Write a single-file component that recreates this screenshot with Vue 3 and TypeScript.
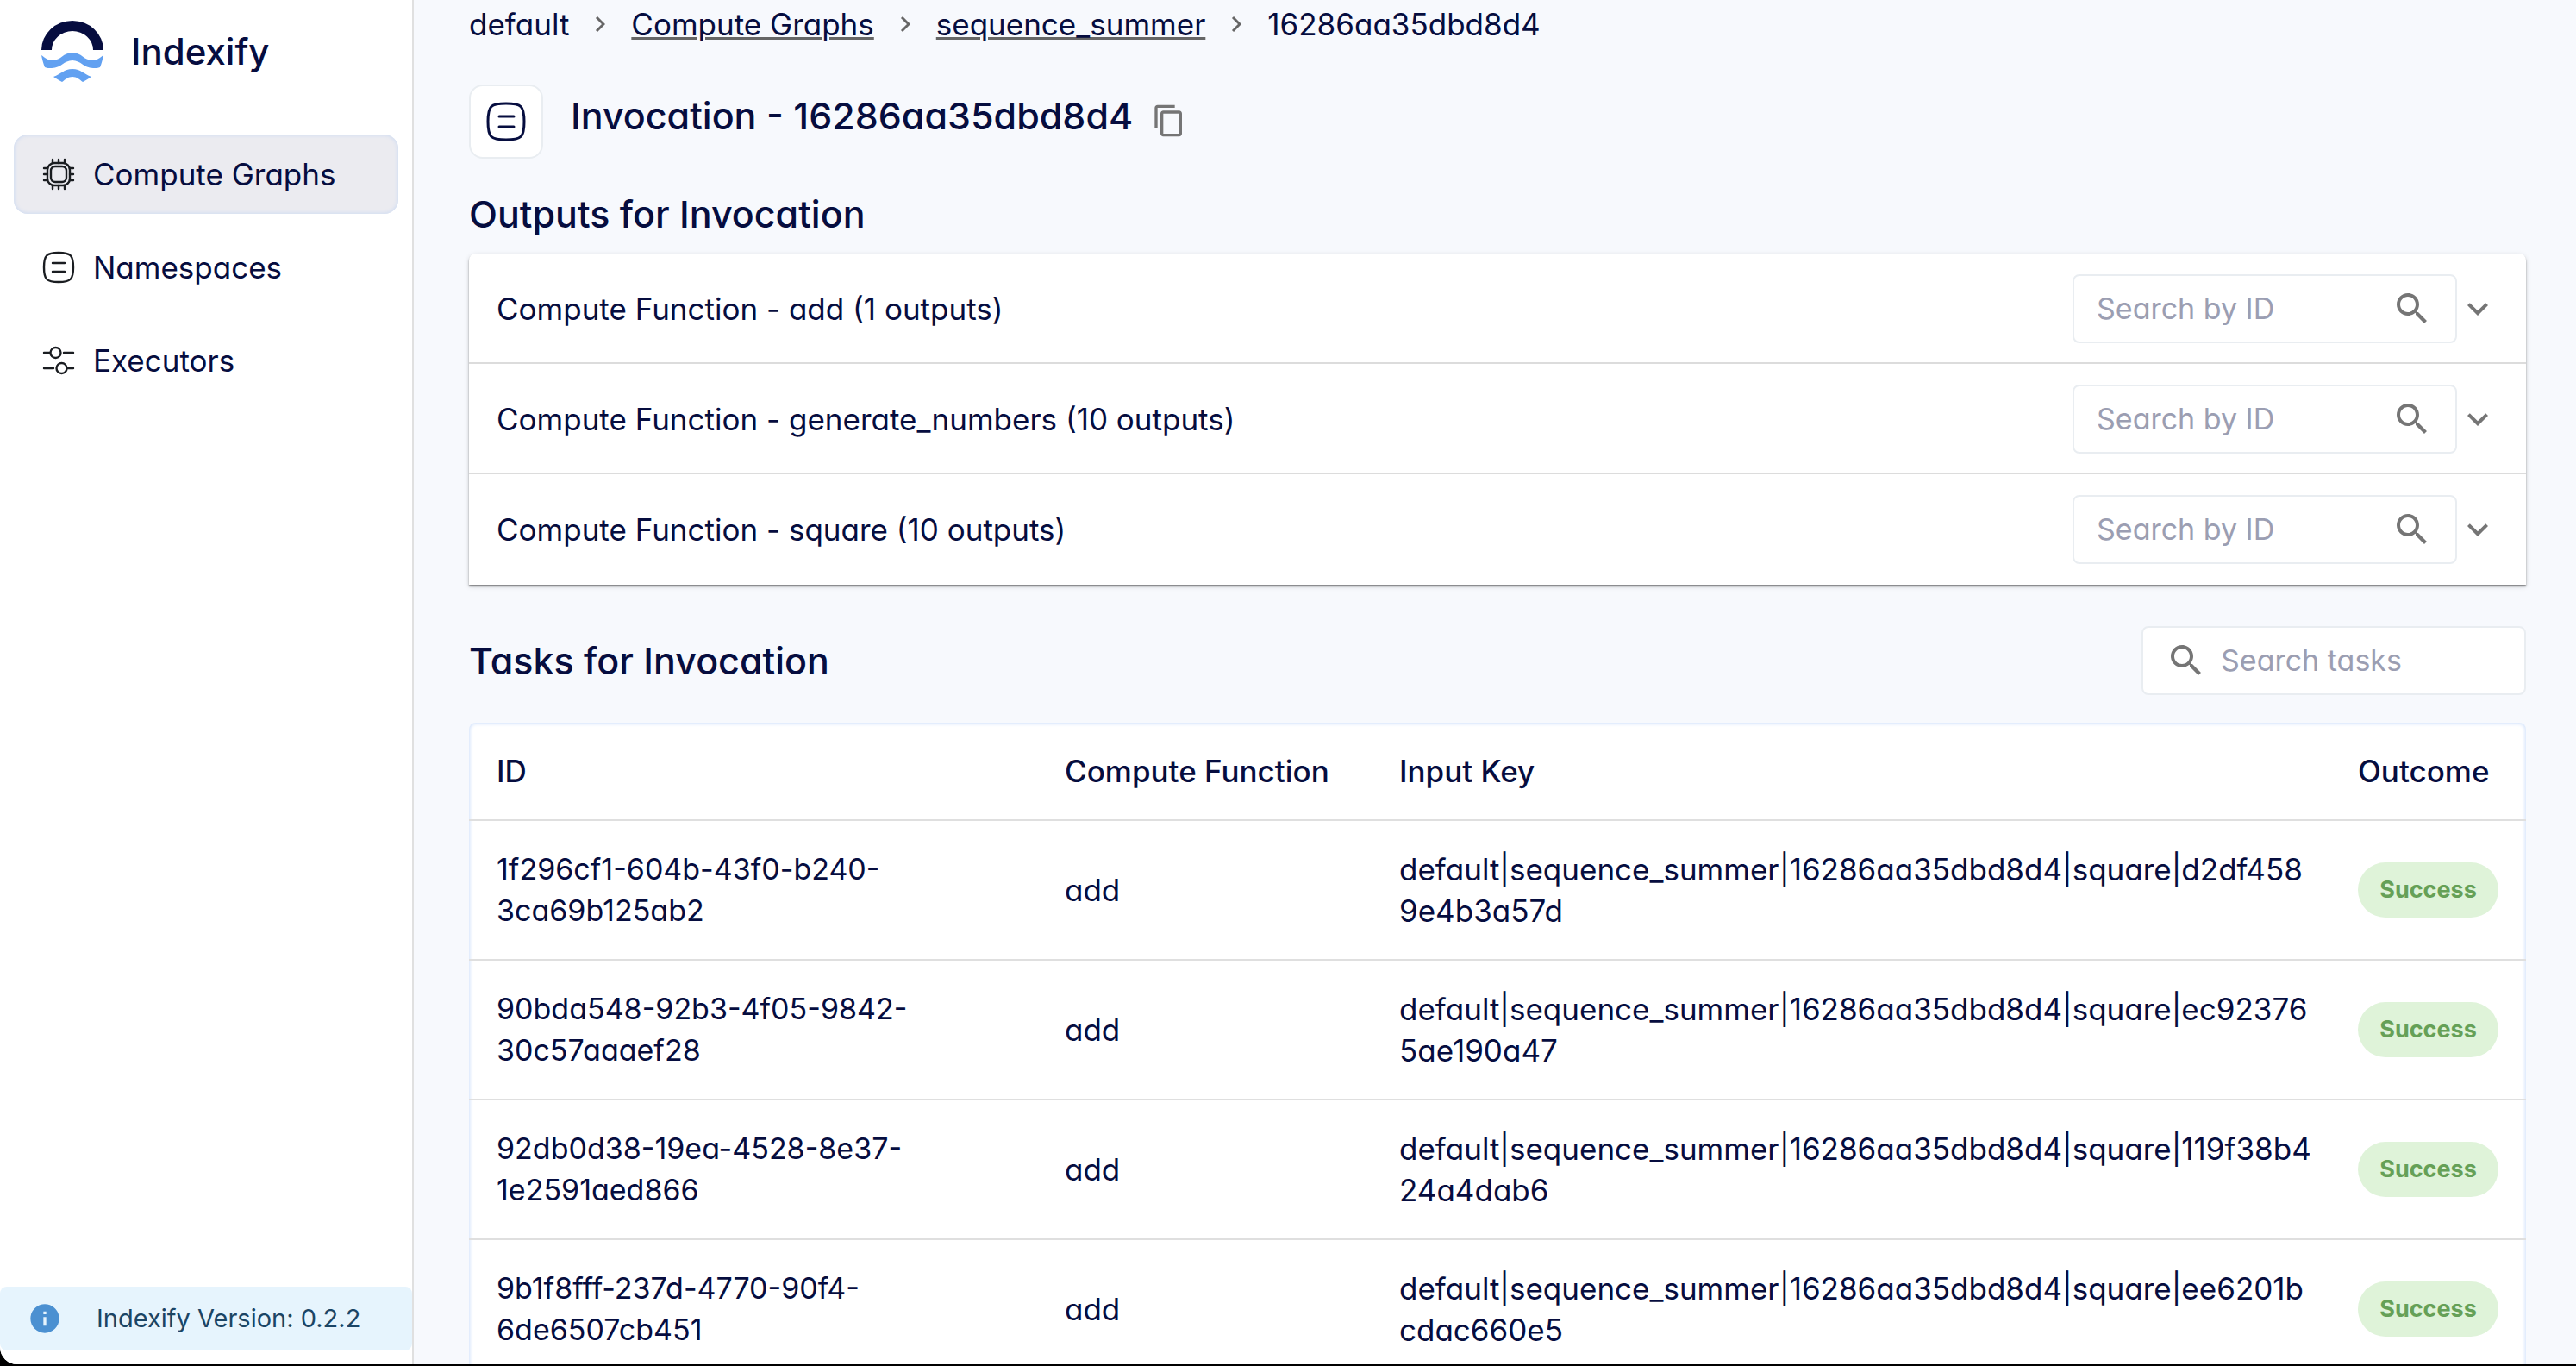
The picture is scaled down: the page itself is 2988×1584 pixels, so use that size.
<script setup lang="ts">
import { ref } from 'vue'

interface NavItem {
  label: string
  icon: 'cpu' | 'text' | 'sliders'
  active: boolean
}

interface OutputGroup {
  name: string
  count: number
}

interface Task {
  id: string
  fn: string
  key: string[]
  outcome: string
}

const invocationId = '16286aa35dbd8d4'

const navItems: NavItem[] = [
  { label: 'Compute Graphs', icon: 'cpu', active: true },
  { label: 'Namespaces', icon: 'text', active: false },
  { label: 'Executors', icon: 'sliders', active: false },
]

const outputs: OutputGroup[] = [
  { name: 'add', count: 1 },
  { name: 'generate_numbers', count: 10 },
  { name: 'square', count: 10 },
]

const prefix = `default|sequence_summer|${invocationId}|square|`

const tasks: Task[] = [
  { id: '1f296cf1-604b-43f0-b240-3ca69b125ab2', fn: 'add', key: [prefix + 'd2df458', '9e4b3a57d'], outcome: 'Success' },
  { id: '90bda548-92b3-4f05-9842-30c57aaaef28', fn: 'add', key: [prefix + 'ec92376', '5ae190a47'], outcome: 'Success' },
  { id: '92db0d38-19ea-4528-8e37-1e2591aed866', fn: 'add', key: [prefix + '119f38b4', '24a4dab6'], outcome: 'Success' },
  { id: '9b1f8fff-237d-4770-90f4-6de6507cb451', fn: 'add', key: [prefix + 'ee6201b', 'cdac660e5'], outcome: 'Success' },
]

const outputSearch = ref<string[]>(outputs.map(() => ''))
const taskSearch = ref('')
</script>

<template>
  <div class="app">
    <aside class="sidebar">
      <div class="brand">
        <svg class="brand-logo" viewBox="0 0 72 72" aria-hidden="true">
          <path fill="#060D3F" d="M0 34A36 34 0 0 1 72 34H60A24 22 0 0 0 12 34Z" />
          <path
            fill="#62A1F1"
            d="M0 40C4 43 8 46 13 46C23 46 25 37 36 37C47 37 49 46 59 46C64 46 68 43 72 40C71 45 70 49 68 54C66 55 63 55 60 55C49 55 46 46 36 46C26 46 23 55 12 55C9 55 6 55 4 54C2 49 1 45 0 40Z"
          />
          <path
            fill="#62A1F1"
            d="M14 65C23 62 26 56 36 56C46 56 49 62 58 65C55 67 52 69 48 71C44 68 41 65 36 65C31 65 28 68 24 71C20 69 17 67 14 65Z"
          />
        </svg>
        <span class="brand-name">Indexify</span>
      </div>

      <nav class="nav">
        <a v-for="item in navItems" :key="item.label" href="#" class="nav-item" :class="{ active: item.active }">
          <svg class="nav-icon" viewBox="0 0 36 36" aria-hidden="true">
            <template v-if="item.icon === 'cpu'">
              <rect x="5" y="5" width="26" height="26" rx="8" />
              <rect x="9" y="9" width="18" height="18" rx="5" />
              <path d="M11 1v4M18 1v4M25 1v4M11 31v4M18 31v4M25 31v4M1 11h4M1 18h4M1 25h4M31 11h4M31 18h4M31 25h4" />
            </template>
            <template v-else-if="item.icon === 'text'">
              <path d="M1 18C1 4 4 1 18 1S35 4 35 18S32 35 18 35S1 32 1 18Z" />
              <path d="M11 13h14M11 23h14" />
            </template>
            <template v-else>
              <circle cx="14.500" cy="9" r="6" />
              <circle cx="21.500" cy="27" r="6" />
              <path d="M1 9h7M24 9h11M1 27h11M28 27h7" />
            </template>
          </svg>
          <span>{{ item.label }}</span>
        </a>
      </nav>

      <div class="version">
        <svg class="version-icon" viewBox="0 0 24 24" aria-hidden="true">
          <path
            fill="#4B90D1"
            d="M12 2C6.48 2 2 6.480 2 12s4.480 10 10 10 10-4.480 10-10S17.520 2 12 2zm1 15h-2v-6h2v6zm0-8h-2V7h2v2z"
          />
        </svg>
        <span>Indexify Version: 0.2.2</span>
      </div>
    </aside>

    <main class="main">
      <nav class="crumbs" aria-label="Breadcrumb">
        <span>default</span>
        <svg class="crumb-sep" viewBox="0 0 12 20" aria-hidden="true"><path d="M2 2l8 8-8 8" /></svg>
        <a href="#">Compute Graphs</a>
        <svg class="crumb-sep" viewBox="0 0 12 20" aria-hidden="true"><path d="M2 2l8 8-8 8" /></svg>
        <a href="#">sequence_summer</a>
        <svg class="crumb-sep" viewBox="0 0 12 20" aria-hidden="true"><path d="M2 2l8 8-8 8" /></svg>
        <span>{{ invocationId }}</span>
      </nav>

      <header class="title-row">
        <div class="title-icon">
          <svg viewBox="0 0 46 46" aria-hidden="true">
            <path d="M2 23C2 5 5 2 23 2S44 5 44 23S41 44 23 44S2 41 2 23Z" />
            <path d="M15 17h17M15 29h17" />
          </svg>
        </div>
        <h1>Invocation - {{ invocationId }}</h1>
        <button type="button" class="icon-button copy" aria-label="Copy invocation ID">
          <svg viewBox="0 0 24 24" aria-hidden="true">
            <path d="M16 1H4c-1.100 0-2 .9-2 2v14h2V3h12V1zm3 4H8c-1.100 0-2 .9-2 2v14c0 1.100.9 2 2 2h11c1.100 0 2-.9 2-2V7c0-1.100-.9-2-2-2zm0 16H8V7h11v14z" />
          </svg>
        </button>
      </header>

      <h2 class="outputs-heading">Outputs for Invocation</h2>
      <section class="outputs">
        <div v-for="(group, i) in outputs" :key="group.name" class="output-row">
          <span class="output-name">Compute Function - {{ group.name }} ({{ group.count }} outputs)</span>
          <label class="search">
            <input v-model="outputSearch[i]" type="text" placeholder="Search by ID" :aria-label="`Search ${group.name} outputs by ID`" />
            <svg viewBox="0 0 24 24" aria-hidden="true">
              <path d="M15.500 14h-.79l-.28-.27C15.410 12.590 16 11.110 16 9.500 16 5.910 13.090 3 9.500 3S3 5.910 3 9.500 5.910 16 9.500 16c1.610 0 3.090-.59 4.230-1.570l.27.28v.79l5 4.990L20.490 19l-4.990-5zm-6 0C7.010 14 5 11.990 5 9.500S7.010 5 9.500 5 14 7.010 14 9.500 11.990 14 9.500 14z" />
            </svg>
          </label>
          <button type="button" class="icon-button expand" :aria-label="`Expand ${group.name}`">
            <svg viewBox="0 0 24 24" aria-hidden="true"><path d="M16.590 8.590 12 13.170 7.410 8.590 6 10l6 6 6-6z" /></svg>
          </button>
        </div>
      </section>

      <div class="tasks-head">
        <h2>Tasks for Invocation</h2>
        <label class="search leading">
          <svg viewBox="0 0 24 24" aria-hidden="true">
            <path d="M15.500 14h-.79l-.28-.27C15.410 12.590 16 11.110 16 9.500 16 5.910 13.090 3 9.500 3S3 5.910 3 9.500 5.910 16 9.500 16c1.610 0 3.090-.59 4.230-1.570l.27.28v.79l5 4.990L20.490 19l-4.990-5zm-6 0C7.010 14 5 11.990 5 9.500S7.010 5 9.500 5 14 7.010 14 9.500 11.990 14 9.500 14z" />
          </svg>
          <input v-model="taskSearch" type="text" placeholder="Search tasks" aria-label="Search tasks" />
        </label>
      </div>

      <div class="table-card">
        <table>
          <colgroup>
            <col class="col-id" />
            <col class="col-fn" />
            <col class="col-key" />
            <col />
          </colgroup>
          <thead>
            <tr>
              <th scope="col">ID</th>
              <th scope="col">Compute Function</th>
              <th scope="col">Input Key</th>
              <th scope="col">Outcome</th>
            </tr>
          </thead>
          <tbody>
            <tr v-for="task in tasks" :key="task.id">
              <td class="id">{{ task.id }}</td>
              <td>{{ task.fn }}</td>
              <td class="key">{{ task.key.join('\n') }}</td>
              <td><span class="chip">{{ task.outcome }}</span></td>
            </tr>
          </tbody>
        </table>
      </div>
    </main>
  </div>
</template>

<style>
body {
  margin: 0;
  background: #000;
}
</style>

<style scoped>
.app {
  box-sizing: border-box;
  display: flex;
  height: calc(100vh - 2px);
  overflow: hidden;
  border-bottom-left-radius: 20px;
  background: #f7f9fd;
  color: #060d3f;
  font-family: Inter, 'Open Sans', sans-serif;
  font-feature-settings: 'cv11';
  font-size: 35px;
  line-height: 48px;
}

.sidebar {
  box-sizing: border-box;
  display: flex;
  flex-direction: column;
  flex: 0 0 480px;
  padding-bottom: 16px;
  border-right: 2px solid #e0e0e0;
  background: #fff;
}

.brand {
  display: flex;
  align-items: center;
  gap: 32px;
  padding: 24px 48px 60px;
}

.brand-logo {
  width: 72px;
  height: 72px;
}

.brand-name {
  font-size: 42px;
  font-weight: 500;
}

.nav {
  display: flex;
  flex-direction: column;
  gap: 16px;
  padding: 0 16px;
}

.nav-item {
  box-sizing: border-box;
  display: flex;
  align-items: center;
  gap: 22px;
  height: 92px;
  padding: 0 34px;
  border-radius: 16px;
  color: inherit;
  text-decoration: none;
}

.nav-item.active {
  background: #ebebf0;
  box-shadow: inset 0 0 4px 1px #cfdcf2;
}

.nav-icon {
  flex: none;
  width: 36px;
  height: 36px;
  overflow: visible;
  fill: none;
  stroke: #1a1d21;
  stroke-width: 2.4;
  stroke-linecap: round;
}

.version {
  display: flex;
  align-items: center;
  gap: 40px;
  height: 74px;
  margin-top: auto;
  padding: 0 32px;
  border-radius: 8px;
  background: #e6f4fd;
  color: #1b4565;
  font-size: 29px;
}

.version-icon {
  width: 40px;
  height: 40px;
}

.main {
  flex: 1;
  min-width: 0;
  padding: 4px 58px 0 64px;
}

.crumbs {
  display: flex;
  align-items: center;
  gap: 30px;
}

.crumbs a {
  color: inherit;
  text-decoration-color: #666;
  text-decoration-thickness: 3px;
}

.crumb-sep {
  width: 12px;
  height: 20px;
  fill: none;
  stroke: #666;
  stroke-width: 3;
}

.title-row {
  display: flex;
  align-items: flex-start;
  margin-top: 46px;
}

.title-icon {
  box-sizing: border-box;
  display: grid;
  place-items: center;
  width: 86px;
  height: 86px;
  border: 2px solid #e9edf1;
  border-radius: 16px;
  background: #fff;
}

.title-icon svg {
  width: 46px;
  height: 46px;
  fill: none;
  stroke: #060d3f;
  stroke-width: 3;
  stroke-linecap: round;
}

h1,
h2 {
  margin: 0;
  font-size: 43px;
  font-weight: 500;
  line-height: 64px;
}

h1 {
  margin-left: 32px;
  padding-top: 4px;
}

.icon-button {
  display: block;
  padding: 0;
  border: 0;
  background: none;
  line-height: 0;
}

.icon-button svg,
.search svg {
  fill: #757575;
}

.copy {
  margin: 22px 0 0 22px;
}

.copy svg {
  width: 40px;
  height: 40px;
}

.outputs-heading {
  margin-top: 32px;
}

.outputs {
  margin-top: 14px;
  border-radius: 8px 8px 0 0;
  background: #fff;
  box-shadow: 0 2px 2px rgb(0 0 0 / 40%), 0 2px 6px rgb(0 0 0 / 14%);
}

.output-row {
  box-sizing: border-box;
  display: flex;
  align-items: center;
  height: 128px;
  padding: 2px 32px 0;
  border-bottom: 2px solid #dcdcdc;
}

.output-row:last-child {
  border-bottom-color: transparent;
}

.output-name {
  flex: 1;
}

.search {
  box-sizing: border-box;
  display: flex;
  align-items: center;
  width: 446px;
  height: 80px;
  padding: 0 26px;
  border: 2px solid #e9edf1;
  border-radius: 8px;
  background: #fff;
  font-size: 34px;
}

.search input {
  flex: 1;
  min-width: 0;
  padding: 0;
  border: 0;
  outline: 0;
  background: none;
  color: inherit;
  font: inherit;
  font-feature-settings: inherit;
}

.search input::placeholder {
  color: #9b9eb2;
  opacity: 1;
}

.search svg {
  flex: none;
  width: 48px;
  height: 48px;
}

.search.leading {
  gap: 16px;
}

.expand svg {
  width: 48px;
  height: 48px;
}

.tasks-head {
  display: flex;
  align-items: center;
  justify-content: space-between;
  margin: 48px 0 32px;
}

.table-card {
  border-radius: 8px 8px 0 0;
  background: #fff;
  box-shadow: inset 0 0 4px 1px #cfe0fb;
}

table {
  width: 100%;
  border-collapse: separate;
  border-spacing: 0;
  table-layout: fixed;
}

.col-id {
  width: 659px;
}

.col-fn {
  width: 388px;
}

.col-key {
  width: 1112px;
}

th,
td {
  padding: 32px;
  border-bottom: 2px solid #dfdfdf;
  text-align: left;
  vertical-align: middle;
}

th {
  font-weight: 500;
  white-space: nowrap;
}

.id {
  font-size: 34px;
}

.key {
  white-space: pre;
}

.chip {
  display: flex;
  align-items: center;
  justify-content: center;
  width: 163px;
  height: 64px;
  border-radius: 32px;
  background: #dff3d9;
  color: #65a057;
  font-size: 27px;
  font-weight: 700;
}
</style>
